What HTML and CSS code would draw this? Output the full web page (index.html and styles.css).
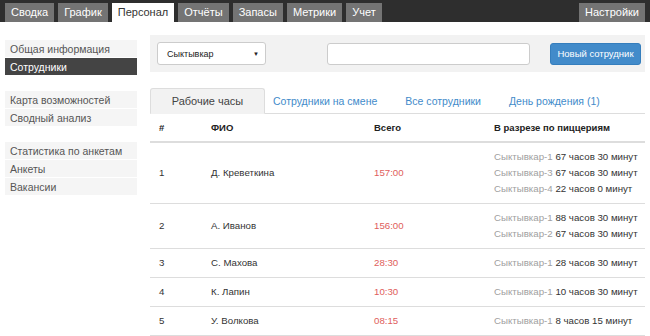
FILE: index.html
```html
<!DOCTYPE html>
<html lang="ru">
<head>
    <meta charset="UTF-8">
    <title>Персонал</title>
    <link rel="stylesheet" href="styles.css">
</head>
<body>
<div class="topbar">
    <ul class="menu">
        <li>Сводка</li>
        <li>График</li>
        <li class="active">Персонал</li>
        <li>Отчёты</li>
        <li>Запасы</li>
        <li>Метрики</li>
        <li>Учет</li>
    </ul>
    <ul class="menu">
        <li>Настройки</li>
    </ul>
</div>
<div class="page">
    <div class="side">
        <ul class="side-group">
            <li>Общая информация</li>
            <li class="active">Сотрудники</li>
        </ul>
        <ul class="side-group">
            <li>Карта возможностей</li>
            <li>Сводный анализ</li>
        </ul>
        <ul class="side-group">
            <li>Статистика по анкетам</li>
            <li>Анкеты</li>
            <li>Вакансии</li>
        </ul>
    </div>
    <div class="content">
        <div class="toolbar">
            <div class="select"><span>Сыктывкар</span><em>&#9660;</em></div>
            <input class="search" type="text">
            <button class="btn">Новый сотрудник</button>
        </div>
        <ul class="tabs">
            <li class="active">Рабочие часы</li>
            <li>Сотрудники на смене</li>
            <li>Все сотрудники</li>
            <li>День рождения (1)</li>
        </ul>
        <table class="grid">
            <colgroup>
                <col style="width:52px">
                <col style="width:163px">
                <col style="width:120px">
                <col>
            </colgroup>
            <thead>
            <tr><th>#</th><th>ФИО</th><th>Всего</th><th>В разрезе по пиццериям</th></tr>
            </thead>
            <tbody>
            <tr>
                <td>1</td><td>Д. Креветкина</td><td class="total">157:00</td>
                <td>
                    <div><span class="city">Сыктывкар-1</span> 67 часов 30 минут</div>
                    <div><span class="city">Сыктывкар-3</span> 67 часов 30 минут</div>
                    <div><span class="city">Сыктывкар-4</span> 22 часов 0 минут</div>
                </td>
            </tr>
            <tr>
                <td>2</td><td>А. Иванов</td><td class="total">156:00</td>
                <td>
                    <div><span class="city">Сыктывкар-1</span> 88 часов 30 минут</div>
                    <div><span class="city">Сыктывкар-2</span> 67 часов 30 минут</div>
                </td>
            </tr>
            <tr>
                <td>3</td><td>С. Махова</td><td class="total">28:30</td>
                <td><div><span class="city">Сыктывкар-1</span> 28 часов 30 минут</div></td>
            </tr>
            <tr>
                <td>4</td><td>К. Лапин</td><td class="total">10:30</td>
                <td><div><span class="city">Сыктывкар-1</span> 10 часов 30 минут</div></td>
            </tr>
            <tr>
                <td>5</td><td>У. Волкова</td><td class="total">08:15</td>
                <td><div><span class="city">Сыктывкар-1</span> 8 часов 15 минут</div></td>
            </tr>
            </tbody>
        </table>
    </div>
</div>
</body>
</html>
```

FILE: styles.css
```css
*{
    margin:0;
    padding:0;
    list-style: none;
    box-sizing: border-box;
}
body{
    font-family: "Liberation Sans", Arial, sans-serif;
    font-size: 11px;
    color: #333;
    background: #fff;
}
.topbar{
    display: flex;
    justify-content: space-between;
    height: 22px;
    padding: 3px 5px 0 5px;
    background: #2e2e2e;
}
.menu{
    display: flex;
    gap: 4px;
}
.menu li{
    height: 19px;
    line-height: 19px;
    padding: 0 6px;
    font-size: 11px;
    color: #fff;
    background: #747474;
}
.menu li.active{
    background: #fff;
    color: #333;
}
.page{
    display: flex;
    gap: 13px;
    padding: 13px 5px 0 5px;
}
.side{
    width: 132px;
    flex: none;
    padding-top: 5px;
}
.side-group{
    margin-bottom: 15px;
}
.side-group li{
    height: 18px;
    line-height: 18px;
    padding-left: 5px;
    font-size: 10.5px;
    color: #555;
    background: #f5f5f5;
    border-bottom: 1px solid #fff;
}
.side-group li.active{
    background: #444;
    color: #fff;
}
.content{
    flex: 1;
}
.toolbar{
    display: flex;
    align-items: center;
    height: 37px;
    padding: 0 4px 0 7px;
    background: #f2f2f2;
}
.select{
    display: flex;
    justify-content: space-between;
    align-items: center;
    width: 109px;
    height: 23px;
    padding: 0 6px 0 9px;
    border: 1px solid #ccc;
    border-radius: 3px;
    background: #fff;
    font-size: 9px;
    color: #222;
}
.select em{
    font-style: normal;
    font-size: 6px;
}
.search{
    width: 203px;
    height: 22px;
    margin-left: 61px;
    border: 1px solid #ccc;
    border-radius: 3px;
    background: #fff;
}
.btn{
    margin-left: auto;
    width: 91px;
    height: 22px;
    border: 1px solid #357ebd;
    border-radius: 3px;
    background: #428bca;
    color: #fff;
    font-family: inherit;
    font-size: 9.5px;
}
.tabs{
    display: flex;
    margin-top: 16px;
    border-bottom: 1px solid #ddd;
}
.tabs li{
    height: 26px;
    line-height: 25px;
    padding: 0 7px;
    margin-right: 12px;
    margin-bottom: -1px;
    font-size: 10.5px;
    color: #428bca;
    border: 1px solid transparent;
}
.tabs li.active{
    width: 115px;
    text-align: center;
    margin-right: 0;
    font-size: 11px;
    color: #444;
    background: #f2f2f2;
    border-color: #ddd;
    border-bottom-color: #f2f2f2;
    border-radius: 3px 3px 0 0;
}
.grid{
    width: 100%;
    border-collapse: collapse;
    table-layout: fixed;
}
.grid th{
    text-align: left;
    font-size: 9.5px;
    line-height: 16px;
    padding: 6px 9px 5px 9px;
    border-bottom: 2px solid #ddd;
    color: #222;
}
.grid td{
    font-size: 9.7px;
    line-height: 16px;
    padding: 6px 0 6px 9px;
    border-bottom: 1px solid #ddd;
    vertical-align: middle;
    white-space: nowrap;
    color: #333;
}
.grid td.total{
    color: #e0605c;
}
.grid .city{
    color: #a0a0a0;
}
```
